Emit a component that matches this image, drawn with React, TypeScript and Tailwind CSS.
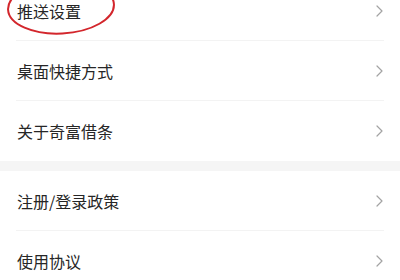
import React from 'react';

const GROUPS: string[][] = [
  ['推送设置', '桌面快捷方式', '关于奇富借条'],
  ['注册/登录政策', '使用协议'],
];

const Chevron = () => (
  <svg width="7" height="12" viewBox="0 0 7 12" fill="none" className="shrink-0">
    <path d="M1 1l5 5-5 5" stroke="#a3a3a3" strokeWidth="1.2" strokeLinecap="round" strokeLinejoin="round" />
  </svg>
);

const Row: React.FC<{ label: string; last: boolean }> = ({ label, last }) => (
  <div className="px-4 bg-white">
    <div
      className={`h-[60px] flex items-center justify-between pl-px pr-[1px] ${
        last ? '' : 'border-b border-[#f3f3f3]'
      }`}
    >
      <span className="text-[16px] text-[#262626] leading-none">{label}</span>
      <Chevron />
    </div>
  </div>
);

export default function App() {
  return (
    <div
      className="w-[400px] h-[280px] overflow-hidden bg-white relative"
      style={{ fontFamily: '"Noto Sans CJK SC", "Noto Sans", sans-serif' }}
    >
      <div className="-mt-[19px]">
        {GROUPS.map((g, gi) => (
          <div key={gi}>
            {gi > 0 && <div className="h-[10px] bg-[#f5f5f5]" />}
            {g.map((label, i) => (
              <Row key={label} label={label} last={i === g.length - 1} />
            ))}
          </div>
        ))}
      </div>

      {/* hand-drawn annotation */}
      <svg className="absolute left-0 top-0 pointer-events-none" width="130" height="40" viewBox="0 0 130 40">
        <ellipse cx="61" cy="7" rx="53" ry="26.5" fill="none" stroke="#d3262c" strokeWidth="2" transform="rotate(-3 61 7)" />
      </svg>
    </div>
  );
}
